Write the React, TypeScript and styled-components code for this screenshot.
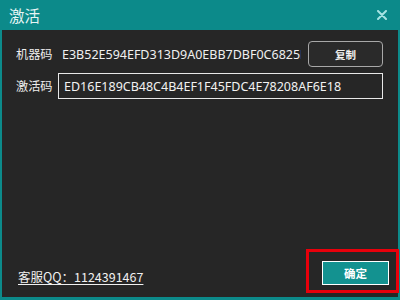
import React from "react";
import styled, { createGlobalStyle } from "styled-components";

const Global = createGlobalStyle`
  html, body { margin: 0; padding: 0; background: #262626; }
  * { box-sizing: border-box; }
`;

const Window = styled.div`
  width: 400px;
  height: 300px;
  display: flex;
  flex-direction: column;
  background: #0c8a8a;
  font-family: "Noto Sans", "Noto Sans CJK SC", sans-serif;
  color: #ececec;
  overflow: hidden;
`;

const TitleBar = styled.div`
  height: 30px;
  flex: none;
  display: flex;
  align-items: center;
  justify-content: space-between;
  padding: 0 13px 0 9px;
`;

const Title = styled.span`
  font-family: "Noto Sans CJK SC", sans-serif;
  font-size: 15.5px;
  color: #e6f4f4;
  line-height: 1;
  margin-top: 1px;
`;

const CloseIcon = styled.svg`
  width: 10px;
  height: 10px;
  display: block;
`;

const Body = styled.div`
  flex: 1;
  margin: 0 2px 3px 2px;
  background: #262626;
  display: flex;
  flex-direction: column;
  padding: 11px 15px 8px 14px;
`;

const Row = styled.div<{ $gap?: number }>`
  display: flex;
  align-items: center;
  gap: ${(p) => p.$gap ?? 5}px;
  margin-bottom: 6px;
`;

const Label = styled.span`
  font-family: "Noto Sans CJK SC", sans-serif;
  font-size: 12.2px;
  width: 37px;
  flex: none;
  white-space: nowrap;
  color: #ededed;
`;

const Code = styled.span`
  flex: 1;
  min-width: 0;
  overflow: hidden;
  white-space: nowrap;
  font-size: 12.5px;
  padding-left: 4px;
  margin-right: 2px;
  color: #f0f0f0;
`;

const CopyButton = styled.button`
  width: 75px;
  height: 26px;
  flex: none;
  border: 1px solid #a8a8a8;
  border-radius: 4px;
  background: #2a2a2a;
  color: #f2f2f2;
  font-family: "Noto Sans CJK SC", sans-serif;
  font-weight: 700;
  font-size: 10.5px;
  padding: 0;
`;

const Input = styled.input`
  flex: 1;
  min-width: 0;
  height: 26px;
  border: 1px solid #e8e8e8;
  background: #262626;
  color: #f2f2f2;
  font-family: "Noto Sans", sans-serif;
  font-size: 12.5px;
  padding: 0 0 0 5px;
  outline: none;
`;

const Footer = styled.div`
  margin-top: auto;
  display: flex;
  align-items: flex-end;
  justify-content: space-between;
  padding-left: 2px;
`;

const Support = styled.a`
  font-family: "Noto Sans CJK SC", sans-serif;
  font-size: 12.5px;
  color: #f0f0f0;
  text-decoration: underline;
  text-underline-offset: 2px;
  margin-bottom: 3px;
`;

const Highlight = styled.div`
  position: relative;
  margin-right: -6px;
  margin-bottom: 4px;
  &::after {
    content: "";
    position: absolute;
    top: -12px;
    bottom: -8px;
    left: -16px;
    right: -10px;
    border: 3px solid #e8000b;
    pointer-events: none;
  }
`;

const OkButton = styled.button`
  width: 67px;
  height: 24px;
  border: 1px solid #ffffff;
  background: #139290;
  color: #ffffff;
  font-family: "Noto Sans CJK SC", sans-serif;
  font-weight: 700;
  font-size: 11.5px;
  padding: 0;
  display: block;
`;

export default function App() {
  return (
    <>
      <Global />
      <Window>
        <TitleBar>
          <Title>激活</Title>
          <CloseIcon viewBox="0 0 10 10">
            <path d="M1 1 L9 9 M9 1 L1 9" stroke="#a6e3e3" strokeWidth="2" strokeLinecap="round" />
          </CloseIcon>
        </TitleBar>
        <Body>
          <Row>
            <Label>机器码</Label>
            <Code>E3B52E594EFD313D9A0EBB7DBF0C6825D</Code>
            <CopyButton>复制</CopyButton>
          </Row>
          <Row>
            <Label>激活码</Label>
            <Input defaultValue="ED16E189CB48C4B4EF1F45FDC4E78208AF6E18" />
          </Row>
          <Footer>
            <Support href="#">客服QQ：1124391467</Support>
            <Highlight>
              <OkButton>确定</OkButton>
            </Highlight>
          </Footer>
        </Body>
      </Window>
    </>
  );
}
